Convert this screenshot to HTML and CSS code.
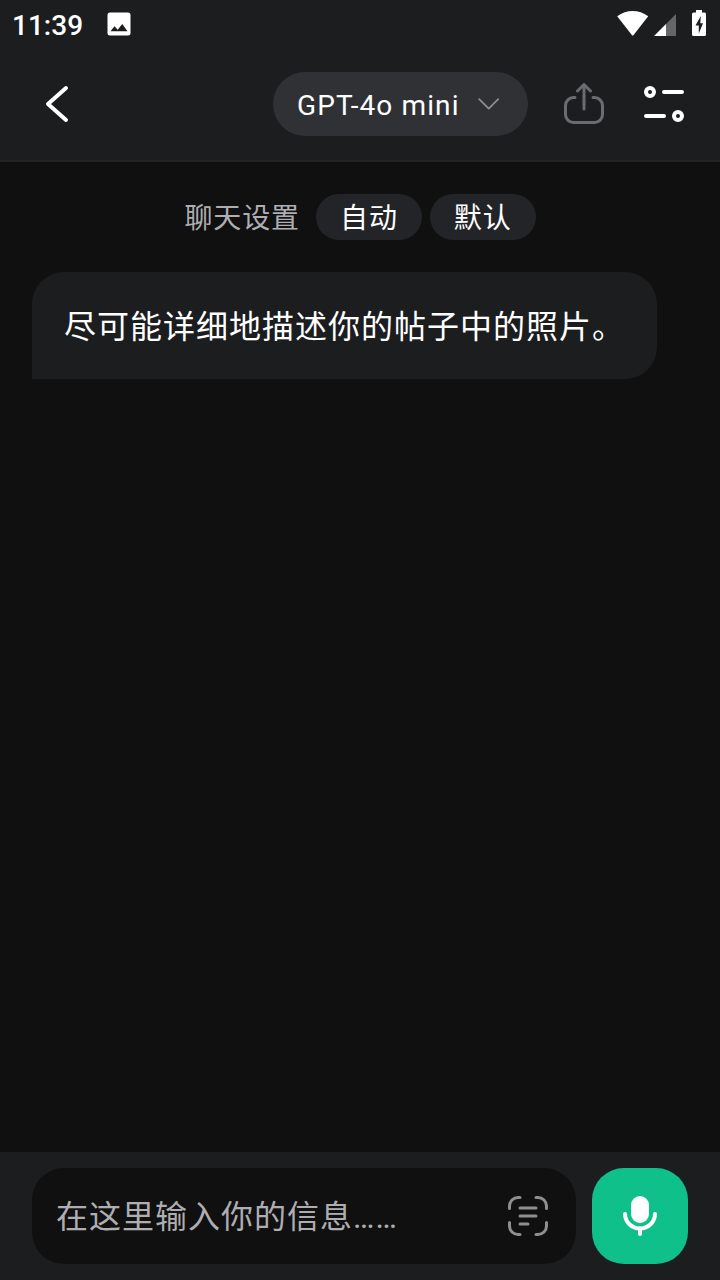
FILE: index.html
```html
<!DOCTYPE html>
<html lang="zh-CN">
<head>
    <title>GPT-4o mini</title>
    <meta charset="UTF-8">
    <meta name="viewport" content="width=device-width, initial-scale=1.0">
    <link rel="stylesheet" href="styles.css">
</head>
<body>
    <div class="app">
        <div class="status-bar">
            <span class="time">11:39</span>
            <svg class="picture-icon" width="24" height="24" viewBox="0 0 24 24">
                <path fill="#fff" fill-rule="evenodd" d="M3 .5h18A2.5 2.5 0 0 1 23.500 3v18a2.500 2.500 0 0 1-2.500 2.500H3A2.500 2.500 0 0 1 .5 21V3A2.500 2.500 0 0 1 3 .5zM3.500 19.300h17L15.200 12l-4.500 5.700-3.200-3.500z"/>
            </svg>
            <div class="status-icons">
                <svg width="32" height="26" viewBox="0 0 32 26">
                    <path fill="#fff" d="M.2 6.300C9.500-.8 21.900-.8 31.200 6.300L16.200 25.500h-1z"/>
                </svg>
                <svg width="22" height="26" viewBox="0 0 22 26">
                    <path fill="#656668" d="M12 14L22 4v22H12z"/>
                    <path fill="#fff" d="M0 26L12 14v12z"/>
                </svg>
                <svg class="battery" width="14" height="26" viewBox="0 0 14 26">
                    <path fill="#fff" d="M4 0h6v2.500h2.500A1.500 1.500 0 0 1 14 4v20.500a1.500 1.500 0 0 1-1.500 1.500h-11A1.500 1.500 0 0 1 0 24.500V4a1.500 1.500 0 0 1 1.500-1.500H4z"/>
                    <path fill="#1c1d1f" d="M8.800 6L3.500 15.500h3.300v8L11 13.200H8.300z"/>
                </svg>
            </div>
        </div>

        <div class="header">
            <svg class="back" width="24" height="38" viewBox="0 0 24 38">
                <path class="stroke white" stroke-width="4" d="M21 3L3 19l18 16"/>
            </svg>
            <div class="model">
                <span>GPT-4o mini</span>
                <svg width="22" height="14" viewBox="0 0 22 14">
                    <path class="stroke" stroke="#8e8e93" stroke-width="1.7" d="M1.200 1.200l9.500 9.500 9.500-9.500"/>
                </svg>
            </div>
            <svg class="share" width="42" height="44" viewBox="0 0 42 44">
                <path class="stroke" stroke="#6b6c6f" stroke-width="3" d="M12 15.500H10.500a8 8 0 0 0-8 8V32.500a8 8 0 0 0 8 8h21a8 8 0 0 0 8-8v-9a8 8 0 0 0-8-8H30M21 27V2.500M14.500 9L21 2.500l6.500 6.500"/>
            </svg>
            <svg class="options" width="40" height="36" viewBox="0 0 40 36">
                <circle class="stroke white" stroke-width="4" cx="6" cy="6" r="4"/>
                <circle class="stroke white" stroke-width="4" cx="34" cy="30" r="4"/>
                <path class="stroke white" stroke-width="4" d="M20 6h18M2 30h18"/>
            </svg>
        </div>

        <div class="chat">
            <div class="settings">
                <span class="label">聊天设置</span>
                <span class="pill">自动</span>
                <span class="pill">默认</span>
            </div>
            <div class="message">尽可能详细地描述你的帖子中的照片。</div>
        </div>

        <div class="composer">
            <div class="input">
                <span class="placeholder">在这里输入你的信息……</span>
                <svg width="40" height="40" viewBox="0 0 40 40">
                    <path class="stroke" stroke="#8e8e93" stroke-width="3" d="M1.500 12.500V10A8.500 8.500 0 0 1 10 1.500h2M28 1.500h2a8.500 8.500 0 0 1 8.500 8.500v2.500M38.500 26.500V30a8.500 8.500 0 0 1-8.500 8.500h-2M12 38.500h-2A8.500 8.500 0 0 1 1.500 30v-3.500M12 12h16M12 20h16M12 28h8"/>
                </svg>
            </div>
            <div class="mic">
                <svg width="34" height="40" viewBox="0 0 34 40">
                    <rect x="8" y="0" width="18" height="27" rx="9" fill="#fff"/>
                    <path class="stroke white" stroke-width="4" d="M2 18a15 14.500 0 0 0 30 0M17 33v5"/>
                </svg>
            </div>
        </div>
    </div>
</body>
</html>
```
FILE: styles.css
```css
* {
    box-sizing: border-box;
}
body {
    margin: 0;
    background: #101010;
    color: #fff;
    font-family: Roboto, "Noto Sans CJK SC", sans-serif;
}
svg {
    display: block;
    flex-shrink: 0;
}
.stroke {
    fill: none;
    stroke-linecap: round;
    stroke-linejoin: round;
}
.white {
    stroke: #fff;
}
.app {
    display: flex;
    flex-direction: column;
    width: 720px;
    height: 1280px;
}
.status-bar {
    display: flex;
    align-items: center;
    height: 48px;
    padding: 0 14px 0 12px;
    background: #1c1d1f;
}
.time {
    width: 95px;
    padding-top: 2px;
    font-size: 28px;
    font-weight: 500;
}
.status-icons {
    display: flex;
    align-items: flex-end;
    gap: 5px;
    height: 26px;
    margin-left: auto;
    margin-bottom: 2px;
}
.battery {
    margin-left: 11px;
}
.header {
    display: flex;
    align-items: center;
    height: 114px;
    padding: 0 36px 0 45px;
    border-bottom: 2px solid #232428;
    background: #1c1d1f;
}
.model {
    display: flex;
    align-items: center;
    justify-content: space-between;
    width: 255px;
    height: 64px;
    margin-left: auto;
    padding: 2px 28px 0 24px;
    border-radius: 32px;
    background: #303135;
    font-size: 28px;
    letter-spacing: 1.12px;
}
.share {
    margin-left: 35px;
}
.options {
    margin-left: 39px;
}
.chat {
    flex: 1;
    padding: 32px;
}
.settings {
    display: flex;
    justify-content: center;
    gap: 8px;
    height: 46px;
    margin-bottom: 32px;
    font-size: 28px;
    line-height: 50px;
    letter-spacing: 0.9px;
}
.label {
    margin-right: 8px;
    color: #aeaeb2;
}
.pill {
    padding: 0 24px;
    border-radius: 23px;
    background: #232428;
    height: 46px;
}
.message {
    width: fit-content;
    padding: 32px 32px 28px;
    border-radius: 32px 32px 32px 0;
    background: #1c1d1f;
    font-size: 32px;
    line-height: 47px;
    letter-spacing: 1px;
}
.composer {
    display: flex;
    gap: 16px;
    height: 128px;
    padding: 16px 32px;
    background: #1c1d1f;
}
.input {
    display: flex;
    flex: 1;
    align-items: center;
    justify-content: space-between;
    padding: 0 28px 0 24px;
    border-radius: 32px;
    background: #101010;
    color: #aeaeb2;
    font-size: 32px;
    letter-spacing: 1px;
}
.placeholder {
    padding-bottom: 4px;
}
.mic {
    display: flex;
    align-items: center;
    justify-content: center;
    width: 96px;
    border-radius: 32px;
    background: #10c08a;
}
```
